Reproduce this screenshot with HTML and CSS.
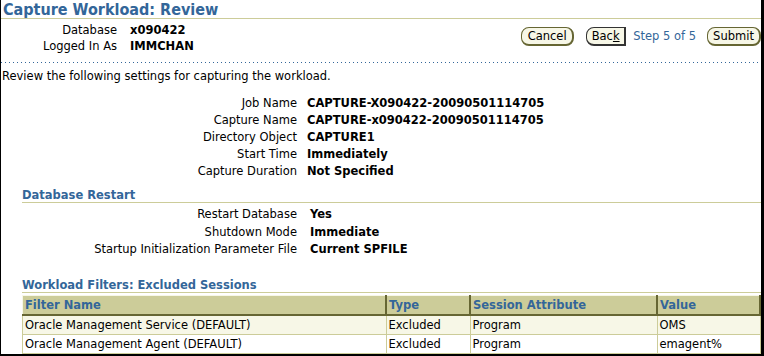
FILE: index.html
```html
<!DOCTYPE html>
<html lang="en">
<head>
  <meta charset="UTF-8" />
  <title>Capture Workload: Review</title>
  <link rel="stylesheet" href="styles.css">
</head>
<body>
  <div class="frame">
    <h1 class="page-title">Capture Workload: Review</h1>

    <div class="info-bar">
      <div class="info">
        <div class="info-label">Database</div>
        <div class="info-value">x090422</div>
        <div class="info-label">Logged In As</div>
        <div class="info-value">IMMCHAN</div>
      </div>
      <div class="train">
        <button class="btn btn-cancel">Cancel</button>
        <button class="btn btn-back">Bac<u>k</u></button>
        <span class="step">Step 5 of 5</span>
        <button class="btn btn-submit">Submit</button>
      </div>
    </div>

    <div class="dots"></div>

    <p class="intro">Review the following settings for capturing the workload.</p>

    <div class="fields">
      <div class="label">Job Name</div><div class="value">CAPTURE-X090422-20090501114705</div>
      <div class="label">Capture Name</div><div class="value">CAPTURE-x090422-20090501114705</div>
      <div class="label">Directory Object</div><div class="value">CAPTURE1</div>
      <div class="label">Start Time</div><div class="value">Immediately</div>
      <div class="label">Capture Duration</div><div class="value">Not Specified</div>
    </div>

    <h2 class="section">Database Restart</h2>
    <div class="fields fields-wide">
      <div class="label">Restart Database</div><div class="value">Yes</div>
      <div class="label">Shutdown Mode</div><div class="value">Immediate</div>
      <div class="label">Startup Initialization Parameter File</div><div class="value">Current SPFILE</div>
    </div>

    <h2 class="section section-filters">Workload Filters: Excluded Sessions</h2>
    <table class="filters">
      <thead>
        <tr>
          <th class="col-name">Filter Name</th>
          <th class="col-type">Type</th>
          <th class="col-attr">Session Attribute</th>
          <th>Value</th>
        </tr>
      </thead>
      <tbody>
        <tr class="band">
          <td>Oracle Management Service (DEFAULT)</td>
          <td>Excluded</td>
          <td>Program</td>
          <td>OMS</td>
        </tr>
        <tr>
          <td>Oracle Management Agent (DEFAULT)</td>
          <td>Excluded</td>
          <td>Program</td>
          <td>emagent%</td>
        </tr>
      </tbody>
    </table>
  </div>
</body>
</html>
```

FILE: styles.css
```css
body {
  margin: 0;
  background: #fff;
  font-family: 'DejaVu Sans', Tahoma, sans-serif;
  font-size: 11.5px;
  color: #000;
}
.frame {
  box-sizing: border-box;
  width: 764px;
  height: 356px;
  border-left: 1px solid #000;
  border-right: 3px solid #000;
  border-bottom: 2px solid #000;
  overflow: hidden;
}
.page-title {
  margin: 0;
  padding: 1px 0 0 2px;
  font-family: 'DejaVu Sans Condensed', 'DejaVu Sans', sans-serif;
  font-size: 16px;
  line-height: 17px;
  color: #336699;
  border-bottom: 1px solid #cccc99;
}
.info-bar {
  display: flex;
  justify-content: space-between;
  align-items: center;
  padding-top: 3px;
  height: 32px;
}
.info {
  display: grid;
  grid-template-columns: 116px auto;
  column-gap: 13px;
  line-height: 16px;
}
.info-label {
  text-align: right;
}
.info-value {
  font-weight: bold;
}
.train {
  display: flex;
  align-items: center;
  margin-top: -4px;
}
.btn {
  font-family: inherit;
  font-size: 11.5px;
  height: 19px;
  padding: 0;
  margin: 0;
  text-align: center;
  background: #f7f7e7;
  border: 1px solid #666633;
  border-right-width: 2px;
  border-bottom-width: 2px;
  border-radius: 8px;
  color: #000;
}
.btn-cancel {
  width: 53px;
  margin-left: 1px;
}
.btn-back {
  width: 40px;
  margin-left: 12px;
  border-radius: 8px 0 0 8px;
  border-color: #333;
}
.btn-submit {
  width: 54px;
}
.step {
  color: #336699;
  margin: 0 11px 0 7px;
}
.dots {
  height: 1px;
  margin-top: 8px;
  background: repeating-linear-gradient(to right, #336699 0 1px, transparent 1px 4px);
}
.intro {
  margin: 6px 0 0 1px;
  line-height: 14px;
}
.fields {
  display: grid;
  grid-template-columns: 296px auto;
  column-gap: 10px;
  margin-top: 12px;
  line-height: 17px;
}
.fields-wide {
  column-gap: 13px;
  margin-top: 3px;
  line-height: 17.5px;
}
.label {
  text-align: right;
}
.value {
  font-weight: bold;
}
.section {
  margin: 8px 0 0 21px;
  padding: 0;
  font-size: 11.5px;
  line-height: 14px;
  color: #336699;
  border-bottom: 1px solid #cccc99;
}
.section-filters {
  margin-top: 19px;
}
.filters {
  margin: 2px 0 0 21px;
  width: 739px;
  border-collapse: collapse;
}
.filters th {
  background: #cccc99;
  color: #336699;
  text-align: left;
  padding: 0 2px;
  height: 18px;
  border-top: 1px solid #f7f7e7;
  border-left: 1px solid #f7f7e7;
  border-right: 2px solid #666633;
  border-bottom: 2px solid #666633;
}
.filters td {
  border: 1px solid #cccc99;
  padding: 0 2px;
  height: 18px;
}
.filters .band td {
  background: #f7f7e7;
}
.col-name {
  width: 358px;
}
.col-type {
  width: 78px;
}
.col-attr {
  width: 181px;
}
```
